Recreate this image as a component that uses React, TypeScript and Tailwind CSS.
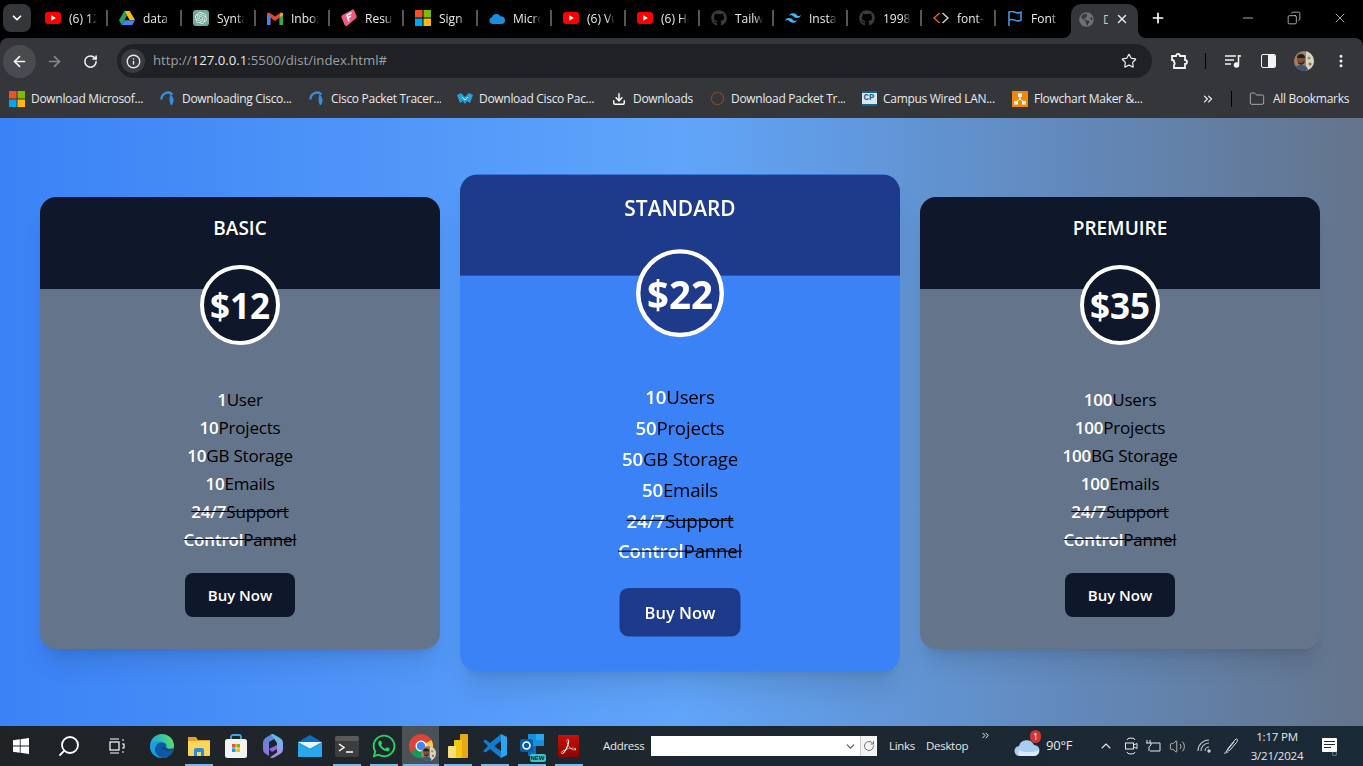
import { ArrowLeft, ArrowRight, ChevronDown, ChevronUp, ChevronsRight, Download, Folder, Info, Minus, MoreVertical, Plus, RotateCw, Search, Star, X, Copy, Volume2, Square } from 'lucide-react';
import { FaGithub, FaGlobeAmericas, FaWhatsapp } from 'react-icons/fa';
import { SiAdobeacrobatreader, SiOpenai, SiTailwindcss } from 'react-icons/si';
import type { ReactNode } from 'react';

const uiFont = "font-['Open_Sans','Noto_Sans',sans-serif]";

const Youtube = () => (
  <svg width="16" height="12" viewBox="0 0 16 12">
    <rect width="16" height="12" rx="3" fill="#f00" />
    <path d="M6.3 3.3 10.8 6l-4.5 2.7z" fill="#fff" />
  </svg>
);

const MsLogo = ({ size = 16 }: { size?: number }) => (
  <svg width={size} height={size} viewBox="0 0 16 16">
    <rect width="7.5" height="7.5" fill="#f25022" />
    <rect x="8.5" width="7.5" height="7.5" fill="#7fba00" />
    <rect y="8.5" width="7.5" height="7.5" fill="#00a4ef" />
    <rect x="8.5" y="8.5" width="7.5" height="7.5" fill="#ffb900" />
  </svg>
);

const Drive = () => (
  <svg width="16" height="14" viewBox="0 0 16 14">
    <path d="M5.3 0h5.4l5.3 9h-5.4z" fill="#fbbc04" />
    <path d="M5.3 0 8 4.6 2.7 14 0 9.3z" fill="#1fa463" />
    <path d="M2.7 14 5.4 9.2H16L13.3 14z" fill="#4285f4" />
  </svg>
);

const Gmail = () => (
  <svg width="16" height="13" viewBox="0 0 16 13">
    <path d="M0 1.5V13h3.4V5.6L8 9l4.6-3.4V13H16V1.5L13.8.4 8 4.6 2.2.4z" fill="#ea4335" />
    <path d="M0 2v11h3.4V4.6z" fill="#4285f4" />
    <path d="M16 2v11h-3.4V4.6z" fill="#34a853" />
    <path d="M13.8.4 12.6 5.6 16 3V1.5z" fill="#fbbc04" />
  </svg>
);

const Resume = () => (
  <svg width="16" height="18" viewBox="0 0 16 18">
    <path d="M1.5 6 11 .8c1-.5 2 0 2.4 1l2.2 5.4c.3.9 0 1.7-.8 2.2L6.5 16.6c-1.2.8-2.5.4-3-.8L.6 8.6C.3 7.6.6 6.5 1.5 6z" fill="#ee5a7e" />
    <path d="m5.5 6.5 5-2.7M6.5 9l3.5-2M6 6.5l2 6" stroke="#fff" strokeWidth="1.6" />
  </svg>
);

const OneDrive = () => (
  <svg width="16" height="11" viewBox="0 0 16 11">
    <path d="M3.5 11A3.4 3.4 0 0 1 3 4.3 4.6 4.6 0 0 1 11.5 3.4 3.8 3.8 0 0 1 16 7.2 3.700 3.700 0 0 1 12.4 11z" fill="#1c8ee0" />
  </svg>
);

const CodeIcon = () => (
  <svg width="16" height="12" viewBox="0 0 16 12" fill="none" strokeWidth="1.4">
    <path d="M6.5 1 1 6l5.500 5" stroke="#e8622a" />
    <path d="m9.5 1 5.500 5-5.500 5" stroke="#d6d6d6" />
  </svg>
);

const FlagIcon = () => (
  <svg width="14" height="15" viewBox="0 0 14 15" fill="none" stroke="#4a90e2" strokeWidth="1.6">
    <path d="M1 15V1c2-1 4-.6 6 .2s4 1 6 .1v8c-2 1-4 .7-6-.1S3 8 1 9" />
  </svg>
);

const tabs: { icon: ReactNode; label: string }[] = [
  { icon: <Youtube />, label: '(6) 12' },
  { icon: <Drive />, label: 'data -' },
  { icon: <span className="flex h-4 w-4 items-center justify-center rounded-[3px] bg-[#74aa9c]"><SiOpenai size={12} color="#e5f0ed" /></span>, label: 'Syntax' },
  { icon: <Gmail />, label: 'Inbox' },
  { icon: <Resume />, label: 'Resume' },
  { icon: <MsLogo />, label: 'Sign' },
  { icon: <OneDrive />, label: 'Micro' },
  { icon: <Youtube />, label: '(6) Vu' },
  { icon: <Youtube />, label: '(6) Ho' },
  { icon: <FaGithub size={16} color="#3b3b3b" />, label: 'Tailwi' },
  { icon: <SiTailwindcss size={16} color="#38bdf8" />, label: 'Instal' },
  { icon: <FaGithub size={16} color="#3b3b3b" />, label: '1998' },
  { icon: <CodeIcon />, label: 'font-' },
  { icon: <FlagIcon />, label: 'Font' },
];

const TabBar = () => (
  <div className="flex h-[38px] items-stretch bg-black pt-[4px]">
    <div className="mx-[3px] flex h-7 w-7 items-center justify-center rounded-lg bg-[#35363a]">
      <ChevronDown size={14} color="#fff" strokeWidth={3} />
    </div>
    {tabs.map((tab, i) => (
      <div key={tab.label} className="flex h-7 w-[74px] items-center pl-[11px]">
        <span className="flex w-4 justify-center">{tab.icon}</span>
        <span className="ml-2 mt-[2px] w-[28px] overflow-hidden whitespace-nowrap text-[12px] text-[#e8eaed] [mask-image:linear-gradient(to_right,black_70%,transparent)]">
          {tab.label}
        </span>
        {i < tabs.length - 1 && <div className="ml-auto h-4 w-[2px] bg-[#55565a]" />}
      </div>
    ))}
    <div className="relative ml-px flex h-[34px] w-[67px] items-center rounded-t-[10px] bg-[#35363a] pb-1 pl-2">
      <div className="absolute -left-2 bottom-0 h-2 w-2 bg-[#35363a]">
        <div className="h-2 w-2 rounded-br-lg bg-black" />
      </div>
      <div className="absolute -right-2 bottom-0 h-2 w-2 bg-[#35363a]">
        <div className="h-2 w-2 rounded-bl-lg bg-black" />
      </div>
      <FaGlobeAmericas size={15} color="#6e7074" />
      <span className="ml-[9px] mt-[2px] w-[5px] overflow-hidden text-[12px] text-[#c8c8c8]">D</span>
      <X size={14} color="#e8eaed" className="ml-[7px]" strokeWidth={2.5} />
    </div>
    <Plus size={16} color="#fff" strokeWidth={2.5} className="ml-[12px] mt-[6px]" />
    <div className="ml-auto flex h-7 items-center gap-[31px] pr-[15px] text-white">
      <Minus size={16} strokeWidth={1} />
      <Copy size={14} strokeWidth={1.1} className="-scale-x-100" />
      <X size={16} strokeWidth={1} />
    </div>
  </div>
);

const Avatar = ({ size = 20 }: { size?: number }) => (
  <svg width={size} height={size} viewBox="0 0 20 20">
    <clipPath id={`av${size}`}><circle cx="10" cy="10" r="10" /></clipPath>
    <g clipPath={`url(#av${size})`}>
      <rect width="20" height="20" fill="#a0805f" />
      <rect x="12" width="8" height="20" fill="#d8d2c4" />
      <circle cx="7" cy="8" r="4" fill="#7c5238" />
      <path d="M3 7a4 4 0 0 1 8 0z" fill="#22201f" />
      <path d="M3.5 9c1 4 5.5 4 7 0v3l-3 2-3-1z" fill="#2c2723" />
      <path d="M0 20c0-4 3-6 7-6s7 2 7 6z" fill="#3a5878" />
      <circle cx="15" cy="7" r="1.5" fill="#7d9a63" />
      <circle cx="16" cy="13" r="1.5" fill="#a0603f" />
    </g>
  </svg>
);

const Toolbar = () => (
  <div className="flex h-[41px] items-center rounded-t-lg bg-[#35363a] pt-[5px]">
    <div className="ml-[3px] flex h-[33px] w-[33px] items-center justify-center rounded-full bg-[#4a4b4e]">
      <ArrowLeft size={17} color="#f1f3f4" strokeWidth={2.4} />
    </div>
    <ArrowRight size={17} color="#85878a" strokeWidth={2.4} className="ml-[10px]" />
    <RotateCw size={15} color="#f1f3f4" strokeWidth={2.4} className="ml-[20px]" />
    <div className="ml-[19px] flex h-[34px] w-[1035px] items-center rounded-full bg-[#202124] pl-1 pr-[15px]">
      <span className="flex h-6 w-6 items-center justify-center rounded-full bg-[#3a3b3e]">
        <Info size={15} color="#e8eaed" strokeWidth={2.2} />
      </span>
      <span className="ml-2 text-[13.2px] text-[#9aa0a6]">
        http://<span className="text-[#e8eaed]">127.0.0.1</span>:5500/dist/index.html#
      </span>
      <Star size={16} color="#e8eaed" strokeWidth={1.8} className="ml-auto" />
    </div>
    <svg width="18" height="18" viewBox="0 0 18 18" fill="none" stroke="#f1f3f4" strokeWidth="1.8" className="ml-[18px]">
      <path d="M2 4h4a2 2 0 0 1 4 0h5v4a2 2 0 0 1 0 4v4H4v-3a2 2 0 0 0 0-3V9a2 2 0 0 0-2-1z" />
    </svg>
    <div className="ml-[17px] h-[16px] w-px bg-black" />
    <svg width="16" height="14" viewBox="0 0 16 14" fill="none" stroke="#f1f3f4" strokeWidth="1.5" className="ml-[19px]">
      <path d="M0 2h11M0 6h9M0 10h6" />
      <path d="M14 2h2M13.5 1v9" />
      <circle cx="11.5" cy="11" r="2" fill="#f1f3f4" />
    </svg>
    <div className="ml-[20px] flex h-[14px] w-[15px] overflow-hidden rounded-[2px] border-[1.5px] border-[#f1f3f4]">
      <div className="ml-auto h-full w-[7px] bg-[#f1f3f4]" />
    </div>
    <div className="ml-[18px]"><Avatar /></div>
    <MoreVertical size={16} color="#f1f3f4" strokeWidth={2.5} className="ml-[19px]" />
  </div>
);

const CiscoSwirl = () => (
  <svg width="16" height="16" viewBox="0 0 16 16" fill="none" stroke="#3a8fdc" strokeWidth="2.4">
    <path d="M1.5 8.500A6.500 6.500 0 0 1 12.500 3.500" />
    <path d="M10.500 4c3.500 3 3 7 1 10-1.500-2-2-5-1-10z" fill="#3a8fdc" strokeWidth="1" />
  </svg>
);

const CiscoBlue = () => (
  <svg width="16" height="14" viewBox="0 0 16 14">
    <path d="M0 3 4 1l4 4 4-4 4 2-3 8-3-2-2 3-2-3-3 2z" fill="#2a9fd6" />
    <path d="m5 5 3 3 3-3" stroke="#bfe6f7" fill="none" />
  </svg>
);

const Octagon = () => (
  <svg width="15" height="15" viewBox="0 0 16 16" fill="none" stroke="#8a4b22" strokeWidth="1.3" strokeDasharray="3 0.6">
    <circle cx="8" cy="8" r="6.5" />
  </svg>
);

const CpIcon = () => (
  <span className="flex h-[15px] w-[15px] flex-col items-center justify-center border-y-2 border-y-[#1d5f8a] bg-[#d8e6ee] font-['Liberation_Mono',monospace] text-[9px] font-bold leading-none text-[#1d5f8a]">CP</span>
);

const DrawIo = () => (
  <svg width="16" height="16" viewBox="0 0 16 16">
    <rect width="16" height="16" fill="#f08705" />
    <path d="M8 5v3M8 8 4 11M8 8l4 3" stroke="#fff" />
    <rect x="6" y="2.5" width="4" height="3.500" fill="#fff" />
    <rect x="2" y="10" width="4" height="3.500" fill="#fff" />
    <rect x="10" y="10" width="4" height="3.500" fill="#fff" />
  </svg>
);

const bookmarks: { icon: ReactNode; label: string; width: string }[] = [
  { icon: <MsLogo />, label: 'Download Microsof...', width: 'w-[113px]' },
  { icon: <CiscoSwirl />, label: 'Downloading Cisco...', width: 'w-[111px]' },
  { icon: <CiscoSwirl />, label: 'Cisco Packet Tracer...', width: 'w-[110px]' },
  { icon: <CiscoBlue />, label: 'Download Cisco Pac...', width: 'w-[116px]' },
  { icon: <Download size={14} color="#fff" strokeWidth={2.5} />, label: 'Downloads', width: 'w-[60px]' },
  { icon: <Octagon />, label: 'Download Packet Tr...', width: 'w-[114px]' },
  { icon: <CpIcon />, label: 'Campus Wired LAN...', width: 'w-[113px]' },
  { icon: <DrawIo />, label: 'Flowchart Maker &...', width: 'w-[109px]' },
];

const BookmarkBar = () => (
  <div className="flex h-[39px] items-center bg-[#35363a] pl-[9px] text-[12px] text-[#e8eaed]">
    {bookmarks.map((b) => (
      <div key={b.label} className="mr-[16px] flex items-center gap-[6px]">
        <span className="flex w-4 justify-center">{b.icon}</span>
        <span className={`${b.width} overflow-hidden whitespace-nowrap tracking-[-0.3px]`}>{b.label}</span>
      </div>
    ))}
    <ChevronsRight size={14} color="#e8eaed" strokeWidth={2.2} className="ml-[42px]" />
    <div className="ml-[16px] h-[16px] w-px bg-black" />
    <Folder size={16} color="#a6a8ab" strokeWidth={1.5} className="ml-[17px]" />
    <span className="ml-2 whitespace-nowrap tracking-[-0.3px]">All Bookmarks</span>
  </div>
);

type Plan = {
  name: string;
  price: string;
  rows: [string, string][];
  struck: [string, string][];
  featured?: boolean;
};

const plans: Plan[] = [
  {
    name: 'BASIC',
    price: '$12',
    rows: [['1', 'User'], ['10', 'Projects'], ['10', 'GB Storage'], ['10', 'Emails']],
    struck: [['24/7', 'Support'], ['Control', 'Pannel']],
  },
  {
    name: 'STANDARD',
    price: '$22',
    rows: [['10', 'Users'], ['50', 'Projects'], ['50', 'GB Storage'], ['50', 'Emails']],
    struck: [['24/7', 'Support'], ['Control', 'Pannel']],
    featured: true,
  },
  {
    name: 'PREMUIRE',
    price: '$35',
    rows: [['100', 'Users'], ['100', 'Projects'], ['100', 'BG Storage'], ['100', 'Emails']],
    struck: [['24/7', 'Support'], ['Control', 'Pannel']],
  },
];

const PlanCard = ({ plan }: { plan: Plan }) => {
  const dark = plan.featured ? 'bg-[#1e3a8a]' : 'bg-[#0f172a]';
  return (
    <div className={`flex flex-col overflow-hidden rounded-2xl shadow-xl ${plan.featured ? 'scale-110 bg-[#3b82f6]' : 'bg-[#64748b]'}`}>
      <div className={`h-[92px] pt-[17px] text-center text-[19px] font-semibold leading-7 text-white ${dark}`}>{plan.name}</div>
      <div className={`relative mx-auto -mt-6 flex h-20 w-20 items-center justify-center rounded-full border-4 border-white pt-[3px] text-[35px] font-bold text-white ${dark}`}>
        {plan.price}
      </div>
      <ul className="mt-[41px] text-center text-[17px] font-medium leading-7 tracking-[-0.2px] text-black">
        {plan.rows.map(([num, text]) => (
          <li key={text}>
            <span className="font-semibold text-white">{num}</span>
            {text}
          </li>
        ))}
        {plan.struck.map(([num, text]) => (
          <li key={text} className="line-through">
            <span className="font-semibold text-white">{num}</span>
            {text}
          </li>
        ))}
      </ul>
      <button className={`mx-auto mb-8 mt-[19px] h-11 w-[110px] rounded-lg text-[15px] font-semibold text-white ${dark}`}>Buy Now</button>
    </div>
  );
};

const Pricing = () => (
  <div className="flex flex-1 items-center bg-linear-to-r/srgb from-[#3b82f6] via-[#60a5fa] to-[#64748b] px-10 pt-[2px]">
    <div className="grid w-[1280px] grid-cols-3 gap-10">
      {plans.map((plan) => (
        <PlanCard key={plan.name} plan={plan} />
      ))}
    </div>
  </div>
);

const WindowsLogo = () => (
  <svg width="16" height="16" viewBox="0 0 16 16" fill="#fff">
    <path d="M0 2.3 6.8 1.3v6.3H0zM7.600 1.200 16 0v7.600H7.600zM0 8.400h6.800v6.300L0 13.700zM7.600 8.400H16V16l-8.400-1.200z" />
  </svg>
);

const TaskView = () => (
  <svg width="16" height="16" viewBox="0 0 16 16" fill="none" stroke="#fff" strokeWidth="1.2">
    <path d="M1 1h9M1 15h9" />
    <rect x="1" y="4" width="9" height="8" />
    <path d="M13 2h2M13 6h2v4h-2M13 14h2" />
  </svg>
);

const Edge = () => (
  <svg width="24" height="24" viewBox="0 0 24 24">
    <defs>
      <linearGradient id="edgeA" x1="0" y1="0.6" x2="1" y2="0.2"><stop offset="0" stopColor="#1b9de2" /><stop offset="0.55" stopColor="#2fc2b0" /><stop offset="1" stopColor="#6fdc5a" /></linearGradient>
    </defs>
    <circle cx="12" cy="12" r="12" fill="url(#edgeA)" />
    <path d="M24 14c-1 5-4 8-8 9.500-5 1.500-10-1-11-6s3-10 8-9c3 .5 4 3 3 5 3 2 7 1 8.200.5-.2-.1-.1.2-.2.500z" fill="#0c59a4" />
    <path d="M13 8c-5-1-9 4-8 9 .7 3 3 5.500 6 6.500C5 23.500 0 18.500 0 12 2 9 8 5 13 8z" fill="#1b9de2" />
    <path d="M11 14c1.500-1.500 3-1 5 0 3 2 6 1.200 8 0-.5 2-2 3-4 3-4 0-7-1-9-3z" fill="#1e2528" opacity="0.35" />
  </svg>
);

const Explorer = () => (
  <svg width="22" height="20" viewBox="0 0 22 20">
    <path d="M0 1h8l2 3h12v4H0z" fill="#e2a32b" />
    <rect y="5" width="22" height="15" rx="1" fill="#f9d65c" />
    <path d="M6 20v-6a2 2 0 0 1 2-2h6a2 2 0 0 1 2 2v6h-3v-4H9v4z" fill="#2a8bd6" />
  </svg>
);

const Store = () => (
  <svg width="22" height="24" viewBox="0 0 22 24">
    <path d="M6 6V3a2 2 0 0 1 2-2h6a2 2 0 0 1 2 2v3" stroke="#3da9e8" strokeWidth="1.8" fill="none" />
    <rect y="5" width="22" height="19" rx="2.5" fill="#f3f3f3" />
    <rect x="7" y="10" width="3.6" height="3.6" fill="#f25022" />
    <rect x="11.4" y="10" width="3.6" height="3.6" fill="#7fba00" />
    <rect x="7" y="14.4" width="3.6" height="3.6" fill="#00a4ef" />
    <rect x="11.4" y="14.4" width="3.6" height="3.6" fill="#ffb900" />
  </svg>
);

const Copilot = () => (
  <svg width="20" height="24" viewBox="0 0 20 24">
    <defs>
      <linearGradient id="copA" x1="0" y1="0" x2="0" y2="1"><stop offset="0" stopColor="#4f8fe0" /><stop offset="1" stopColor="#9a6fd8" /></linearGradient>
      <linearGradient id="copB" x1="0" y1="0" x2="0" y2="1"><stop offset="0" stopColor="#59c3ea" /><stop offset="1" stopColor="#b48ae4" /></linearGradient>
    </defs>
    <path d="M9 0 3 3.500C1 5 0 7 0 9v6c0 2 1 4 3 5l3 2V8l6-3.500z" fill="url(#copA)" />
    <path d="M8 0c1-.2 2 0 3 .5L17 4c2 1 3 3 3 5v6c0 2-1 4-3 5l-6 3.500c-1 .5-3 .5-4 0l7-5V9z" fill="url(#copB)" />
    <path d="M6 15l8-4v4l-5 3z" fill="#8d6ad8" />
  </svg>
);

const Mail = () => (
  <svg width="24" height="22" viewBox="0 0 24 22">
    <path d="M0 7 12 0l12 7v3H0z" fill="#0f6cbd" />
    <path d="M0 7h24v15H0z" fill="#28a8ea" />
    <path d="M0 7h24l-12 6.500z" fill="#e8f4fb" />
    <path d="M0 7l12 7 12-7v1L12 15 0 8z" fill="#0f6cbd" opacity="0.25" />
  </svg>
);

const Terminal = () => (
  <svg width="24" height="21" viewBox="0 0 24 21">
    <rect width="24" height="21" rx="2" fill="#3d3d3d" />
    <rect width="24" height="5" rx="2" fill="#5a5a5a" />
    <path d="m4 8 5 3.5-5 3.5" stroke="#fff" strokeWidth="1.5" fill="none" />
    <path d="M11 16h7" stroke="#fff" strokeWidth="1.5" />
  </svg>
);

const Chrome = () => (
  <div className="relative h-6 w-6">
    <svg width="24" height="24" viewBox="0 0 24 24">
      <circle cx="12" cy="12" r="12" fill="#db4437" />
      <path d="M12 12 1.6 18A12 12 0 0 0 12 24a12 12 0 0 0 3-.4z" fill="#0f9d58" />
      <path d="M12 12 22.4 6A12 12 0 0 1 14 23.800z" fill="#ffcd40" />
      <circle cx="12" cy="12" r="5.5" fill="#fff" />
      <circle cx="12" cy="12" r="4.3" fill="#4285f4" />
    </svg>
    <div className="absolute -bottom-[3px] -right-[3px]"><Avatar size={15} /></div>
  </div>
);

const PowerBi = () => (
  <svg width="20" height="24" viewBox="0 0 20 24">
    <rect x="12" width="8" height="24" rx="1" fill="#e8a917" />
    <rect x="6" y="6" width="8" height="18" rx="1" fill="#f2c811" />
    <rect y="12" width="8" height="12" rx="1" fill="#f9e07a" />
  </svg>
);

const VsCode = () => (
  <svg width="24" height="24" viewBox="0 0 24 24">
    <path d="M18 0v7l-7 5 7 5v7L7 15l-4.500 3.500L0 17l5-5-5-5 2.500-1.500L7 9z" fill="#0f7dd0" />
    <path d="M18 0l6 3v18l-6 3z" fill="#2aa4ee" />
  </svg>
);

const Outlook = () => (
  <div className="relative h-6 w-6">
    <svg width="24" height="22" viewBox="0 0 24 22">
      <path d="M8 0h16v12H8z" fill="#1490df" />
      <path d="M8 12h8v10H8z" fill="#0f6cbd" />
      <path d="M16 0h8v6h-8z" fill="#28a8ea" />
      <rect y="5" width="13" height="13" rx="2" fill="#0a5cab" />
      <circle cx="6.5" cy="11.5" r="3.5" fill="none" stroke="#fff" strokeWidth="1.6" />
    </svg>
    <span className="absolute bottom-[-4px] right-[-2px] rounded-[2px] bg-[#3ec3c3] px-px font-['Liberation_Sans',sans-serif] text-[6px] font-bold leading-[8px] text-[#0b2530]">NEW</span>
  </div>
);

const Acrobat = () => (
  <span className="flex h-[22px] w-[21px] items-center justify-center rounded-[1px] bg-linear-to-b from-[#c8100a] to-[#8a0603]">
    <SiAdobeacrobatreader size={15} color="#fff" />
  </span>
);

const apps: { icon: ReactNode; bar?: string; active?: boolean }[] = [
  { icon: <Edge /> },
  { icon: <Explorer />, bar: 'w-[28px]' },
  { icon: <Store /> },
  { icon: <Copilot /> },
  { icon: <Mail /> },
  { icon: <Terminal />, bar: 'w-[28px]' },
  { icon: <FaWhatsapp size={26} color="#25d366" />, bar: 'w-[28px]' },
  { icon: <Chrome />, bar: 'w-[36px]', active: true },
  { icon: <PowerBi />, bar: 'w-[28px]' },
  { icon: <VsCode />, bar: 'w-[28px]' },
  { icon: <Outlook />, bar: 'w-[28px]' },
  { icon: <Acrobat />, bar: 'w-[28px]' },
];

const TaskBar = () => (
  <div className="flex h-10 items-center bg-gradient-to-r from-[#1f2326] to-[#1a2a37] text-[11.5px] text-[#e6e6e6]">
    <div className="ml-[13px]"><WindowsLogo /></div>
    <Search size={24} color="#fff" strokeWidth={1.8} className="ml-[28px] -scale-x-100" />
    <div className="ml-[28px]"><TaskView /></div>
    <div className="ml-[18px] flex h-10">
      {apps.map((app, i) => (
        <div key={i} className={`relative flex h-10 w-[37px] items-center justify-center ${app.active ? 'bg-[#4a5157]' : ''}`}>
          {app.icon}
          {app.bar && <div className={`absolute bottom-0 left-1/2 h-[2px] -translate-x-1/2 bg-[#76b9ed] ${app.bar}`} />}
        </div>
      ))}
    </div>
    <span className="ml-[16px] w-[42px] whitespace-nowrap tracking-[-0.3px]">Address</span>
    <div className="ml-[6px] flex h-5 w-[226px] items-center justify-end bg-white pr-px">
      <ChevronDown size={13} color="#555" />
      <div className="ml-[3px] flex h-5 w-[16px] items-center justify-center border-l border-l-[#ccc] bg-[#f3f3f3]">
        <RotateCw size={12} color="#777" />
      </div>
    </div>
    <span className="ml-[12px] w-[26px] tracking-[-0.3px]">Links</span>
    <span className="ml-[11px] w-[43px] tracking-[-0.3px]">Desktop</span>
    <ChevronsRight size={11} color="#fff" strokeWidth={2} className="mb-[22px] ml-[11px]" />
    <div className="relative ml-[23px]">
      <svg width="26" height="20" viewBox="0 0 26 20">
        <path d="M6 20a5 5 0 0 1-1-10 8 8 0 0 1 15-1 5.5 5.5 0 0 1 0 11z" fill="#a9cdf0" />
        <path d="M6 20a5 5 0 0 1-1-6c5 3 14 3 20 0a5.500 5.500 0 0 1-5 6z" fill="#dbeafa" />
      </svg>
      <span className="absolute -right-[1px] -top-[6px] flex h-[13px] w-[11px] items-center justify-center rounded-full bg-[#d13438] text-[9px] leading-none text-white">1</span>
    </div>
    <span className="ml-[6px] w-[29px] whitespace-nowrap text-[13px] tracking-[-0.2px]">90°F</span>
    <ChevronUp size={16} color="#e6e6e6" className="ml-[23px]" strokeWidth={1.6} />
    <svg width="14" height="18" viewBox="0 0 14 18" fill="none" stroke="#e6e6e6" className="ml-[10px]">
      <path d="M3 3a4 2 0 0 1 8 0M3 15a4 2 0 0 0 8 0" />
      <rect x="1.5" y="6" width="8" height="6" />
      <path d="M9.5 8 13 6.5v5L9.5 10" />
    </svg>
    <svg width="16" height="13" viewBox="0 0 16 13" fill="none" stroke="#e6e6e6" className="ml-[7px]">
      <path d="M2 0v3M5 0v3M1 3h5v2l-2 2v4" />
      <path d="M6 3h9v8H5" />
    </svg>
    <Volume2 size={17} color="#cfcfcf" strokeWidth={1.2} className="ml-[8px]" />
    <svg width="14" height="14" viewBox="0 0 14 14" fill="none" stroke="#bfc4c8" strokeWidth="1.1" className="ml-[11px]">
      <path d="M8 12a4 4 0 0 1 4-4M4 12a8 8 0 0 1 8-8M1 12A11 11 0 0 1 12 1" />
      <circle cx="12" cy="12" r="1.200" fill="#e6e6e6" />
    </svg>
    <svg width="16" height="18" viewBox="0 0 16 18" fill="none" stroke="#e6e6e6" className="ml-[12px]">
      <path d="M3 15c2-4 8-11 10-13 2 0 2 2 0 4L7 13c-2 2-3 0-1-2l5-6" />
      <path d="M1 16c1 1 2-1 4-1" />
    </svg>
    <div className="ml-[11px] flex w-[54px] flex-col items-center text-[11.5px] leading-[20px] tracking-[-0.2px]">
      <span className="-mb-px whitespace-nowrap">1:17 PM</span>
      <span className="whitespace-nowrap">3/21/2024</span>
    </div>
    <div className="relative ml-[18px] h-[16px] w-[15px]">
      <div className="flex h-[14px] w-[15px] flex-col gap-[2px] rounded-[1px] bg-white px-[2px] pt-[3px]">
        <div className="h-px bg-[#1a2a37]" />
        <div className="h-px bg-[#1a2a37]" />
        <div className="h-px w-[7px] bg-[#1a2a37]" />
      </div>
      <Square size={5} color="#e6e6e6" className="absolute -bottom-[2px] right-0" />
    </div>
  </div>
);

export default function App() {
  return (
    <div className={`flex h-screen w-full flex-col overflow-hidden bg-black ${uiFont}`}>
      <TabBar />
      <Toolbar />
      <BookmarkBar />
      <Pricing />
      <TaskBar />
    </div>
  );
}
